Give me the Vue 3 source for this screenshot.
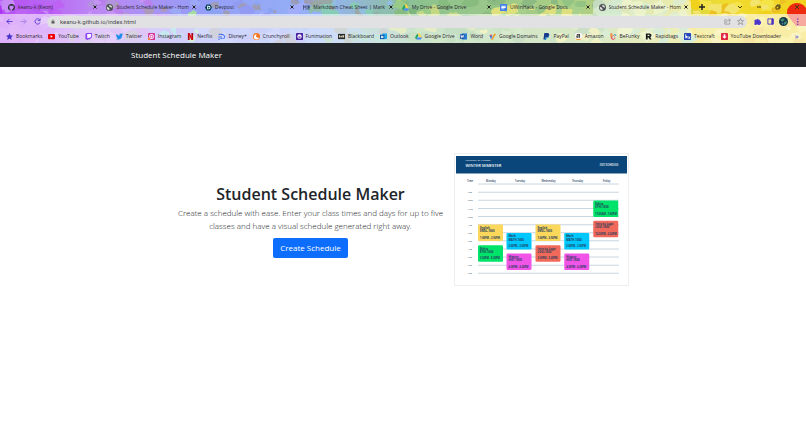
<script setup>
import { ref } from 'vue'

const url = ref('keanu-k.github.io/index.html')

// each icon is a list of [fill, path] drawn on a 16x16 grid
const disc = 'M8 0a8 8 0 1 0 0 16a8 8 0 1 0 0-16z'
const tile = 'M2 0h12a2 2 0 0 1 2 2v12a2 2 0 0 1-2 2H2a2 2 0 0 1-2-2V2a2 2 0 0 1 2-2z'
const drive = [
  ['#1fa463', 'M5.5 1L0 10.500L2.700 15L8 5.500z'],
  ['#ffd04b', 'M5.500 1h5L16 10.500h-5.300z'],
  ['#4688f4', 'M5.500 10.500H16L13.300 15H2.700z'],
]
const globe = [
  ['#4d5156', disc],
  ['#d9ded6', 'M2 6c3 0 3 2 5 3s1 4 0 5c-4-1-6-4-5-8zM8 2c4 0 6 3 6 6c-2 1-3-1-5-2s-3-2-1-4z'],
]

const icons = {
  github: [['#24292f', 'M8 0a8 8 0 0 0-2.500 15.600c.4 0 .5-.2.5-.4v-1.500c-2.200.5-2.700-1-2.700-1c-.4-.9-.9-1.200-.9-1.200c-.7-.5.1-.5.1-.5c.8.1 1.200.8 1.200.8c.7 1.300 1.900.9 2.300.7c.1-.5.3-.9.5-1.100c-1.800-.2-3.600-.9-3.600-4c0-.9.3-1.600.8-2.100c-.1-.2-.4-1 .1-2.100c0 0 .7-.2 2.200.8a7.500 7.500 0 0 1 4 0c1.500-1 2.200-.8 2.200-.8c.4 1.100.2 1.900.1 2.100c.5.600.8 1.300.8 2.100c0 3.100-1.900 3.800-3.700 4c.3.300.6.800.6 1.500v2.200c0 .2.1.5.6.4A8 8 0 0 0 8 0z']],
  globe,
  devpost: [['#003e54', 'M4 1h8l4 7l-4 7H4L0 8z'], ['#ffffff', 'M5 4h3.500a4 4 0 0 1 0 8H5zM7 6v4h1.500a2 2 0 0 0 0-4z']],
  markdown: [['#4a5a78', 'M0 3h2l2 3l2-3h2v10H6V7L4 9L2 7v6H0zM10 3h4l2 2v3l-2 1l2 4h-2l-2-4v4h-2z']],
  drive,
  docs: [['#3f7de8', tile], ['#ffffff', 'M3 4h10v2H3zM3 7h10v2H3zM3 10h7v2H3z']],
  star: [['#4634c8', 'M8 0l2.300 5.300L16 6l-4.200 3.800L13 16l-5-3.200L3 16l1.200-6.200L0 6l5.700-.7z']],
  youtube: [['#f00000', 'M2 2h12a2 2 0 0 1 2 2v8a2 2 0 0 1-2 2H2a2 2 0 0 1-2-2V4a2 2 0 0 1 2-2z'], ['#ffffff', 'M6 5l5 3l-5 3z']],
  twitch: [['#8b3ff5', 'M3 0h13v9l-5 5H8l-2 2H4v-2H1V3z'], ['#ffffff', 'M5 2h9v6l-3 3H8l-2 2v-2H5z']],
  twitter: [['#1d8fe8', 'M16 3l-2 2c0 6-4 10-9 10c-2 0-4-.5-5-1.500c2 0 3.500-.5 4.500-1.500c-1.500 0-2.500-1-3-2H3C1 9.500.5 8 .5 6.500L2 7C.5 6 .3 3.500 1.200 2C3 4 5 5.500 8 5.500C7.500 3 9 1 11.200 1c1 0 1.800.4 2.300 1L15.500 1L14.500 3z']],
  instagram: [['#d6339a', tile], ['#f98a3a', 'M0 9l7 7H2a2 2 0 0 1-2-2z'], ['#ffffff', 'M5 3h6l2 2v6l-2 2H5l-2-2V5zM5 5v6h6V5z'], ['#ffffff', 'M8 6a2 2 0 1 0 0 4a2 2 0 1 0 0-4z']],
  netflix: [['#b1060f', 'M2 0h4v16H2zM10 0h4v16h-4z'], ['#e50914', 'M2 0h4l8 16h-4z']],
  disney: [['#3a6cf0', 'M1 3c7-3 15 0 15 6c0 5-7 6-10 4V7h2v5c3 1 6 0 6-3c0-4-7-6-12-4zM1 8h4v2H1zM0 13h5v2H0z']],
  crunchyroll: [['#f47521', disc], ['#ffffff', 'M9 3a6 6 0 1 0 5 7a4 4 0 1 1-5-7z']],
  funimation: [['#4b1f9e', tile], ['#ffffff', 'M8 3a5 5 0 1 0 0 10a5 5 0 1 0 0-10z'], ['#4b1f9e', 'M5 8h6a3 3 0 0 1-6 0z']],
  blackboard: [['#262626', 'M0 2h16v12H0z'], ['#d9d9c0', 'M2 5h3v5H2zM6 6h3v4H6zM10 5h4v5h-4z']],
  outlook: [['#28a8ea', 'M5 1h11v13H5z'], ['#0a5bab', 'M0 4h10v10H0z'], ['#ffffff', 'M5 6a3 3 0 1 0 0 6a3 3 0 1 0 0-6zM5 8a1 1 0 1 1 0 2a1 1 0 1 1 0-2z']],
  word: [['#2b7cd3', 'M4 1h12v14H4z'], ['#174ea6', 'M0 3h10v10H0z'], ['#ffffff', 'M1 5h2l.5 3L4.500 5h1L6.500 8L7 5h2l-1.500 6H6L5 8l-1 3H2.500z']],
  domains: [['#4285f4', 'M1 5h7l-2 8H4z'], ['#f29b1d', 'M12 1l4 1l-8 14H5z'], ['#ea4335', 'M1 5l5-2v5z']],
  paypal: [['#173a8c', 'M3 0h7c4 0 5 3 4 6s-3 4-6 4H6l-1 5H1z'], ['#1e9bd7', 'M13 5c2 3 0 7-4 7H8l-1 4H4l1-5h3c3 0 5-3 5-6z']],
  amazon: [['#f4f4f0', tile], ['#222222', 'M4 2h7v9H9V9c-3 3-6 2-6-1s3-3 6-3V4H4zM9 6C6 6 5 7 6 8s3 0 3-2z'], ['#f08a00', 'M1 12c5 3 10 3 14 0v1c-4 4-10 4-14 0z']],
  befunky: [['#e0566a', 'M1 1h4v5a5 5 0 1 1-3 5zM8 7a3 3 0 1 0 0 6a3 3 0 1 0 0-6z'], ['#3aa0d8', 'M8 3h5l2 4l-3-1z'], ['#f0a030', 'M1 1h4v5l-3 5z']],
  rapidtags: [['#1b1b1b', 'M2 1h8c6 0 6 7 2 8l3 6h-4L8 10H6v5H2zM6 4v3h3c2 0 2-3 0-3z']],
  textcraft: [['#2447b8', tile], ['#ffffff', 'M3 3h2v4h3v5H3zM5 9v1h1V9zM9 8h2l1 1l1-1h2l-2 2l2 3h-2l-1-1l-1 1H9l2-3z']],
  downloader: [['#e32644', tile], ['#ffffff', 'M6 3h4v5h3l-5 5l-5-5h3z']],
}

const tabs = [
  { icon: 'github', title: 'keanu-k (Keon)' },
  { icon: 'globe', title: 'Student Schedule Maker - Hom' },
  { icon: 'devpost', title: 'Devpost' },
  { icon: 'markdown', title: 'Markdown Cheat Sheet | Mark' },
  { icon: 'drive', title: 'My Drive - Google Drive' },
  { icon: 'docs', title: 'UWinHack - Google Docs' },
  { icon: 'globe', title: 'Student Schedule Maker - Hom', active: true },
]

const bookmarks = [
  ['star', 'Bookmarks'],
  ['youtube', 'YouTube'],
  ['twitch', 'Twitch'],
  ['twitter', 'Twitter'],
  ['instagram', 'Instagram'],
  ['netflix', 'Netflix'],
  ['disney', 'Disney+'],
  ['crunchyroll', 'Crunchyroll'],
  ['funimation', 'Funimation'],
  ['blackboard', 'Blackboard'],
  ['outlook', 'Outlook'],
  ['drive', 'Google Drive'],
  ['word', 'Word'],
  ['domains', 'Google Domains'],
  ['paypal', 'PayPal'],
  ['amazon', 'Amazon'],
  ['befunky', 'BeFunky'],
  ['rapidtags', 'Rapidtags'],
  ['textcraft', 'Textcraft'],
  ['downloader', 'YouTube Downloader'],
]

// paint splashes of the browser theme, left to right
const palettes = [
  { to: 60, colors: ['#b44df2', '#ad44f2', '#c07af5'] },
  { to: 165, colors: ['#b070ea', '#a886d8', '#bd84f2', '#a08cb0'] },
  { to: 200, colors: ['#8f8af0', '#72c8d8', '#8f9bf5', '#98d898'] },
  { to: 310, colors: ['#858cf0', '#8e90b0', '#94a2fa', '#7b97f0'] },
  { to: 390, colors: ['#82b4dc', '#7eb4a2', '#8a9a98', '#78c4ae'] },
  { to: 480, colors: ['#78b26e', '#8ac478', '#bcd272', '#6cae6e'] },
  { to: 600, colors: ['#84bc74', '#dadc6c', '#9cca7e', '#7eb072'] },
  { to: 690, colors: ['#b8d68c', '#d6e48c', '#a0d096'] },
  { to: 830, colors: ['#f0d21c', '#f4e448', '#ecc020', '#f2e46c'] },
]

let seed = 11
const rand = () => {
  seed = (seed * 16807) % 2147483647
  return seed / 2147483647
}

const splashes = Array.from({ length: 420 }, () => {
  const x = rand() * 806
  const y = rand() * 43
  const r = 2 + rand() * 5
  const pts = Array.from({ length: 9 }, (_, i) => {
    const a = (i / 9) * Math.PI * 2
    const d = r * (0.6 + rand() * 0.6)
    return `${Math.round(x + Math.cos(a) * d * 1.3)},${Math.round(y + Math.sin(a) * d)}`
  })
  const { colors } = palettes.find(p => x < p.to)
  return { points: pts.join(' '), fill: colors[Math.floor(rand() * colors.length)] }
})

const days = [
  ['Monday', 144],
  ['Tuesday', 260],
  ['Wednesday', 374],
  ['Thursday', 490],
  ['Friday', 606],
]

const hours = ['9:00', '10:00', '11:00', '12:00', '1:00', '2:00', '3:00', '4:00', '5:00', '6:00', '7:00']
  .map((label, i) => ({ label, y: 153 + Math.round(i * 32.4) }))

const classes = [
  { x: 96, y: 286, color: '#fbd75b', name: 'English', code: 'ENGL-1000', time: '1:00PM - 2:50PM' },
  { x: 96, y: 369, color: '#00e36b', name: 'Ethics', code: 'ETHI-1000', time: '3:30PM - 5:20PM' },
  { x: 210, y: 320, color: '#00c8ff', name: 'Math', code: 'MATH-1000', time: '2:00PM - 3:50PM' },
  { x: 210, y: 402, color: '#f055e8', name: 'History', code: 'HIST-1000', time: '4:30PM - 6:20PM' },
  { x: 326, y: 286, color: '#fbd75b', name: 'English', code: 'ENGL-1000', time: '1:00PM - 2:50PM' },
  { x: 326, y: 369, color: '#f0695a', name: 'Intro to Logic', code: 'LOGI-1000', time: '3:30PM - 5:20PM' },
  { x: 441, y: 320, color: '#00c8ff', name: 'Math', code: 'MATH-1000', time: '2:00PM - 3:50PM' },
  { x: 441, y: 402, color: '#f055e8', name: 'History', code: 'HIST-1000', time: '4:30PM - 6:20PM' },
  { x: 557, y: 190, color: '#00e36b', name: 'Ethics', code: 'ETHI-1000', time: '11:00AM - 1:00PM' },
  { x: 557, y: 271, color: '#f0695a', name: 'Intro to Logic', code: 'LOGI-1000', time: '12:30PM - 2:20PM' },
]
</script>

<template>
  <div class="page">
    <div class="browser">
      <svg class="theme" viewBox="0 0 806 43" preserveAspectRatio="none" aria-hidden="true">
        <polygon v-for="(s, i) in splashes" :key="i" :points="s.points" :fill="s.fill" />
        <path d="M788 16a9 8 0 0 1 18-8v18h-10z" fill="#ee2a10" />
      </svg>

      <div class="tab-strip">
        <div class="tabs">
          <div v-for="(tab, i) in tabs" :key="i" class="tab" :class="{ active: tab.active }">
            <svg class="icon" viewBox="0 0 16 16" aria-hidden="true">
              <path v-for="([fill, d], j) in icons[tab.icon]" :key="j" :fill="fill" :d="d" fill-rule="evenodd" />
            </svg>
            <button class="tab-title">{{ tab.title }}</button>
            <button class="close" aria-label="Close tab">
              <svg viewBox="0 0 8 8"><path d="M1 1l6 6M7 1L1 7" /></svg>
            </button>
          </div>
        </div>
        <button class="new-tab" aria-label="New tab">
          <svg viewBox="0 0 8 8"><path d="M4 0v8M0 4h8" /></svg>
        </button>
        <div class="window-buttons">
          <button aria-label="Search tabs"><svg viewBox="0 0 8 8"><path d="M2 3l2 2l2-2" /></svg></button>
          <button aria-label="Minimize"><svg viewBox="0 0 8 8"><path d="M2 4h4" /></svg></button>
          <button aria-label="Restore"><svg viewBox="0 0 8 8"><path d="M2 3h3v3H2zM3 3V2h3v3H5" /></svg></button>
          <button aria-label="Close"><svg viewBox="0 0 8 8"><path d="M2 2l4 4M6 2L2 6" /></svg></button>
        </div>
      </div>

      <div class="toolbar">
        <button class="tool" aria-label="Back"><svg viewBox="0 0 16 16"><path d="M15 8H2M8 2L2 8l6 6" /></svg></button>
        <button class="tool faded" aria-label="Forward"><svg viewBox="0 0 16 16"><path d="M1 8h13M8 2l6 6l-6 6" /></svg></button>
        <button class="tool" aria-label="Reload"><svg viewBox="0 0 16 16"><path d="M13 4a6 6 0 1 0 1 6M14 1v5H9" /></svg></button>
        <div class="omnibox">
          <svg class="lock" viewBox="0 0 16 16" aria-hidden="true">
            <path d="M2 7h12v9H2z" fill="#555" />
            <path d="M5 7V4a3 3 0 0 1 6 0v3" fill="none" stroke="#555" stroke-width="2" />
          </svg>
          <input v-model="url" aria-label="Address" spellcheck="false">
          <button class="tool grey" aria-label="Share"><svg viewBox="0 0 16 16"><path d="M6 4H2v10h11v-4M5 11c0-4 3-6 9-6M11 1l4 4l-4 4" /></svg></button>
          <button class="tool grey" aria-label="Bookmark this page"><svg viewBox="0 0 16 16"><path d="M8 1l2 5h5l-4 4l2 5l-5-3l-5 3l2-5l-4-4h5z" /></svg></button>
        </div>
        <div class="extras">
          <button class="tool" aria-label="Extensions"><svg viewBox="0 0 16 16"><path class="solid" d="M2 5h4a2 2 0 1 1 4 0h3v4a2 2 0 1 1 0 3v3H9a2 2 0 0 0-4 0H2v-4a2 2 0 0 0 0-3z" /></svg></button>
          <button class="tool" aria-label="Side panel"><svg viewBox="0 0 16 16"><path d="M2 2h12v12H2z" /><path class="solid" d="M11 2h3v12h-3z" /></svg></button>
          <button class="avatar" aria-label="Profile">
            <svg viewBox="0 0 16 16">
              <path :d="disc" fill="#17394a" />
              <path d="M2 5l5-3l3 3l-4 4zM9 9l5-2l-1 5l-4 2z" fill="#3f8a78" />
              <path d="M4 10l4 1l-1 3z" fill="#5a86b0" />
            </svg>
          </button>
          <button class="tool" aria-label="Menu"><svg viewBox="0 0 16 16"><path class="dots" d="M7 1h3v3H7zM7 7h3v3H7zM7 13h3v3H7z" /></svg></button>
        </div>
      </div>

      <nav class="bookmarks" aria-label="Bookmarks">
        <a v-for="[icon, label] in bookmarks" :key="label" href="#">
          <svg class="icon" viewBox="0 0 16 16" aria-hidden="true">
            <path v-for="([fill, d], j) in icons[icon]" :key="j" :fill="fill" :d="d" fill-rule="evenodd" />
          </svg>
          <span>{{ label }}</span>
        </a>
        <button class="more" aria-label="More bookmarks">»</button>
      </nav>
    </div>

    <header class="navbar">
      <div class="container">
        <a class="brand" href="#">Student Schedule Maker</a>
      </div>
    </header>

    <main class="hero">
      <section class="intro">
        <h1>Student Schedule Maker</h1>
        <p>Create a schedule with ease. Enter your class times and days for up to five classes and have a visual schedule generated right away.</p>
        <button class="create">Create Schedule</button>
      </section>

      <figure class="preview">
        <svg viewBox="0 0 692 524" role="img" aria-label="Example schedule">
          <rect x="4" y="8" width="684" height="70" fill="#0a4679" />
          <text class="school" x="42" y="29">University of Windsor</text>
          <text class="term" x="42" y="50">WINTER SEMESTER</text>
          <text class="year" x="654" y="47">2022 SCHEDULE</text>

          <text class="day" x="60" y="110">Time</text>
          <text v-for="[day, x] in days" :key="day" class="day" :x="x" y="110">{{ day }}</text>
          <path class="rule" d="M92 120H656" />

          <g v-for="hour in hours" :key="hour.label">
            <text class="hour" x="60" :y="hour.y + 4">{{ hour.label }}</text>
            <path class="rule" :d="`M92 ${hour.y}H656`" />
          </g>

          <g v-for="(c, i) in classes" :key="i">
            <rect :x="c.x - 4" :y="c.y - 4" width="100" height="66" rx="5" :fill="c.color" />
            <text class="class-name" :x="c.x + 4" :y="c.y + 13">{{ c.name }}</text>
            <text class="class-name" :x="c.x + 4" :y="c.y + 26">{{ c.code }}</text>
            <text class="class-time" :x="c.x + 4" :y="c.y + 52">{{ c.time }}</text>
          </g>
        </svg>
      </figure>
    </main>
  </div>
</template>

<style>
body {
  margin: 0;
  background: #fff;
}
</style>

<style scoped>
.page {
  font-family: "Segoe UI", "Open Sans", "Noto Sans", sans-serif;
  color: #212529;
}
button {
  font: inherit;
  color: inherit;
  padding: 0;
  border: 0;
  background: none;
  cursor: pointer;
}
a { color: inherit; text-decoration: none; }
svg { display: block; }

/* browser window */
.browser {
  position: relative;
  overflow: hidden;
  font-size: 5px;
  color: #2a2730;
  background: linear-gradient(90deg, #ab33f2 0%, #b378f2 12%, #8790f5 25%, #86a8f5 40%, #7dba80 52%, #a8ca70 75%, #f0dc30 90%, #f2d020 100%);
}
.theme {
  position: absolute;
  inset: 0;
  width: 100%;
  height: 100%;
}
.tab-strip, .toolbar, .bookmarks {
  position: relative;
  display: flex;
  align-items: center;
}
.tab-strip { height: 14px; }
.tabs {
  flex: 1;
  display: flex;
  min-width: 0;
  height: 14px;
  padding-left: 2px;
}
.tab {
  flex: 1;
  display: flex;
  align-items: center;
  gap: 3px;
  min-width: 0;
  padding: 0 3px 0 6px;
  border-radius: 3px 3px 0 0;
  background: rgba(255,255,255,.12);
}
.tab.active { background: rgba(255,255,255,.55); }
.icon { flex: none; width: 7px; height: 7px; }
.tab-title {
  flex: 1;
  min-width: 0;
  overflow: hidden;
  white-space: nowrap;
  text-align: left;
}
.close { flex: none; width: 4px; }
.close svg { width: 4px; height: 4px; margin: auto; }
.close path, .new-tab path, .window-buttons path {
  fill: none;
  stroke: #222;
  stroke-width: 2;
}
.new-tab { width: 21px; }
.new-tab svg { width: 6px; height: 6px; margin: auto; }
.window-buttons { display: flex; width: 94px; justify-content: flex-end; }
.window-buttons button { width: 19px; }
.window-buttons svg { width: 8px; height: 8px; margin: auto; }
.window-buttons path { stroke: #4a3c10; stroke-width: 1; }

.toolbar {
  gap: 6px;
  height: 15px;
  padding: 0 5px;
  background: rgba(255,255,255,.6);
}
.tool { flex: none; width: 8px; }
.tool svg { width: 7px; height: 7px; margin: auto; }
.tool path {
  fill: none;
  stroke: #4a34cc;
  stroke-width: 2;
}
.tool .solid { fill: #4a34cc; }
.tool .dots { fill: #6a44c0; stroke: none; }
.tool.faded { opacity: .4; }
.tool.grey path { stroke: #555; stroke-width: 1; }
.omnibox {
  flex: 1;
  display: flex;
  align-items: center;
  gap: 5px;
  min-width: 0;
  height: 12px;
  padding: 0 3px 0 4px;
  border-radius: 6px;
  background: #e1e0e2;
}
.lock { flex: none; width: 4px; height: 5px; }
.omnibox input {
  flex: 1;
  min-width: 0;
  padding: 0;
  border: 0;
  outline: 0;
  font: 6px Roboto, sans-serif;
  color: #4c4c50;
  background: none;
}
.extras { display: flex; align-items: center; gap: 5px; }
.avatar svg { width: 9px; height: 9px; }

.bookmarks {
  justify-content: space-between;
  height: 14px;
  padding: 0 7px 0 6px;
  background: rgba(255,255,255,.6);
}
.bookmarks a {
  display: flex;
  align-items: center;
  gap: 3px;
  line-height: 6px;
  white-space: nowrap;
}
.more {
  margin-left: 8px;
  font-size: 8px;
  line-height: 8px;
  color: #4a34cc;
}

/* site */
.navbar { background: #212529; }
.container { max-width: 544px; margin: 0 auto; }
.brand {
  display: inline-block;
  font-size: 8px;
  line-height: 24px;
  color: #fff;
  vertical-align: top;
}
.hero {
  display: flex;
  justify-content: center;
  align-items: center;
  gap: 10px;
  padding: 86px 16px;
}
.intro {
  width: 267px;
  padding-top: 4px;
  text-align: center;
}
h1 {
  margin: 0 0 2px;
  font-size: 16px;
  line-height: 20px;
  font-weight: 600;
}
p {
  margin: 0 0 6px;
  font-size: 8px;
  line-height: 13px;
  font-weight: 300;
}
.create {
  padding: 0 7px;
  border-radius: 2px;
  font-size: 8px;
  line-height: 20px;
  color: #fff;
  background: #0d6efd;
  vertical-align: top;
}
.preview {
  box-sizing: border-box;
  width: 175px;
  margin: 0;
  border: 1px solid #eceef0;
}
.preview svg { width: 100%; }
.preview text { fill: #243c5c; }
.preview .school, .preview .term, .preview .year { fill: #fff; }
.school { font-size: 10px; }
.term { font-size: 16px; font-weight: 600; }
.year { font-size: 10px; text-anchor: end; font-weight: 600; }
.day { font-size: 10px; text-anchor: middle; font-weight: 600; }
.hour { font-size: 8px; text-anchor: middle; }
.rule { stroke: #b5c8d8; stroke-width: 3; }
.class-name { font-size: 11px; font-weight: 700; }
.class-time { font-size: 10px; font-weight: 700; }
</style>
